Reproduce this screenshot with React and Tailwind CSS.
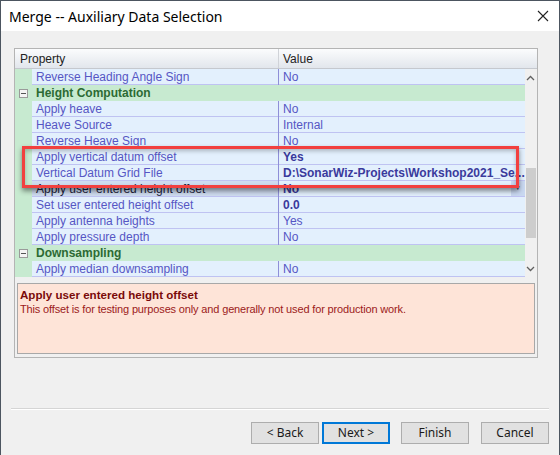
import React from 'react';

const rows = [
  { name: 'Reverse Heading Angle Sign', value: 'No' },
  { cat: 'Height Computation' },
  { name: 'Apply heave', value: 'No' },
  { name: 'Heave Source', value: 'Internal' },
  { name: 'Reverse Heave Sign', value: 'No' },
  { name: 'Apply vertical datum offset', value: 'Yes', bold: true },
  { name: 'Vertical Datum Grid File', value: 'D:\\SonarWiz-Projects\\Workshop2021_Se...', bold: true },
  { name: 'Apply user entered height offset', value: 'No', bold: true, selected: true },
  { name: 'Set user entered height offset', value: '0.0', bold: true },
  { name: 'Apply antenna heights', value: 'Yes' },
  { name: 'Apply pressure depth', value: 'No' },
  { cat: 'Downsampling' },
  { name: 'Apply median downsampling', value: 'No' },
];

const MinusBox = () => (
  <div className="w-[9px] h-[9px] border border-[#9a9a9a] bg-[#f4f4f4] flex items-center justify-center">
    <div className="w-[5px] h-px bg-[#555]" />
  </div>
);

const GridRow = ({ row }) => {
  if (row.cat) {
    return (
      <div className="flex h-[16px] bg-[#c7ead0]">
        <div className="w-[17px] flex items-center justify-center">
          <MinusBox />
        </div>
        <div className="pl-[4px] flex items-center font-bold text-[#2c6a34]">{row.cat}</div>
      </div>
    );
  }
  return (
    <div className="flex h-[16px]">
      <div className="w-[17px] bg-[#c7ead0]" />
      <div
        className={`w-[246px] pl-[4px] flex items-center border-b border-[#bfc3f2] whitespace-nowrap overflow-hidden ${
          row.selected ? 'text-[#1c1c3c] bg-[#cfdcf0]' : 'text-[#5656c4] bg-[#e3f0fd]'
        }`}
      >
        {row.name}
      </div>
      <div className="w-px bg-[#8f8fd8]" />
      <div
        className={`flex-1 pl-[4px] flex items-center border-b border-[#bfc3f2] bg-[#e3f0fd] whitespace-nowrap overflow-hidden ${
          row.bold ? 'font-bold text-[#3a3a9c]' : 'text-[#5656c4]'
        }`}
      >
        <span className="flex-1">{row.value}</span>
        {row.selected && (
          <span className="w-[14px] h-[15px] bg-[#c9d8f1] flex items-center justify-center text-[7px] text-[#555]">▾</span>
        )}
      </div>
    </div>
  );
};

const Chevron = ({ up }) => (
  <svg width="9" height="6" viewBox="0 0 9 6">
    <path d={up ? 'M1 5 L4.5 1.5 L8 5' : 'M1 1 L4.5 4.5 L8 1'} fill="none" stroke="#606060" strokeWidth="1.3" />
  </svg>
);

const Button = ({ children, focused }) => (
  <button
    className={`w-[68px] h-[22px] bg-[#e1e1e1] text-[12px] text-[#1a1a1a] flex items-center justify-center ${
      focused ? 'border border-[#0078d7] shadow-[inset_0_0_0_1px_#0078d7]' : 'border border-[#adadad]'
    }`}
  >
    {children}
  </button>
);

export default function App() {
  return (
    <div className="w-[560px] h-[455px] relative overflow-hidden bg-[#f0f0f0] border-l border-r border-t border-[#4c5560] flex flex-col font-['Liberation_Sans',Arial,sans-serif] text-[12px]">
      {/* title bar */}
      <div className="h-[30px] bg-white flex items-center justify-between pl-[8px] pr-[10px] font-['Noto_Sans',sans-serif]">
        <span className="text-[14px] text-black">Merge -- Auxiliary Data Selection</span>
        <svg width="12" height="12" viewBox="0 0 12 12">
          <path d="M1 1 L11 11 M11 1 L1 11" stroke="#222" strokeWidth="1.1" />
        </svg>
      </div>

      <div className="pl-[13px] pt-[17px]">
        <div className="w-[524px] h-[310px] border border-[#b4b4b4] bg-[#f0f0f0] flex flex-col">
          {/* header */}
          <div className="h-[20px] flex bg-gradient-to-b from-[#fbfcfd] to-[#e2e6ec] border-b border-[#c5c8ce] text-[#222]">
            <div className="w-[264px] pl-[5px] flex items-center border-r border-[#d0d3d8]">Property</div>
            <div className="pl-[4px] flex items-center">Value</div>
          </div>

          {/* rows + scrollbar */}
          <div className="flex h-[208px]">
            <div className="flex-1 flex flex-col">
              {rows.map((r, i) => (
                <GridRow key={i} row={r} />
              ))}
            </div>
            <div className="w-[17px] flex flex-col bg-[#f0f0f0]">
              <div className="h-[17px] flex items-center justify-center">
                <Chevron up />
              </div>
              <div className="flex-1 pt-[82px] pb-[22px] px-[1px] flex flex-col">
                <div className="h-[70px] bg-[#cdcdcd]" />
              </div>
              <div className="h-[17px] flex items-center justify-center">
                <Chevron />
              </div>
            </div>
          </div>

          {/* description */}
          <div className="mt-[6px] mx-[2px] h-[71px] border border-[#a8a8a8] bg-[#fee4d8] px-[2px] pt-[3px]">
            <div className="font-bold text-[11.6px] text-[#7a0a0a] leading-[15px]">Apply user entered height offset</div>
            <div className="text-[11px] text-[#9c1a1a] leading-[15px] tracking-[-0.15px]">
              This offset is for testing purposes only and generally not used for production work.
            </div>
          </div>
        </div>
      </div>

      {/* separator */}
      <div className="mt-[50px] mx-[10px] h-[2px] border-t border-[#d5d5d5] border-b border-b-white" />

      {/* buttons */}
      <div className="mt-[12px] pr-[10px] flex justify-end gap-[11px] font-['Noto_Sans',sans-serif]">
        <div className="flex gap-[3px]">
          <Button>&lt; Back</Button>
          <Button focused>Next &gt;</Button>
        </div>
        <Button>Finish</Button>
        <div className="pl-[1px]">
          <Button>Cancel</Button>
        </div>
      </div>

      {/* annotation box */}
      <div className="absolute left-[21px] top-[145px] w-[497px] h-[42px] border-[3px] border-[#f2403f] shadow-[0_3px_5px_rgba(0,0,0,0.45),inset_0_2px_4px_rgba(0,0,0,0.25)]" />
    </div>
  );
}
